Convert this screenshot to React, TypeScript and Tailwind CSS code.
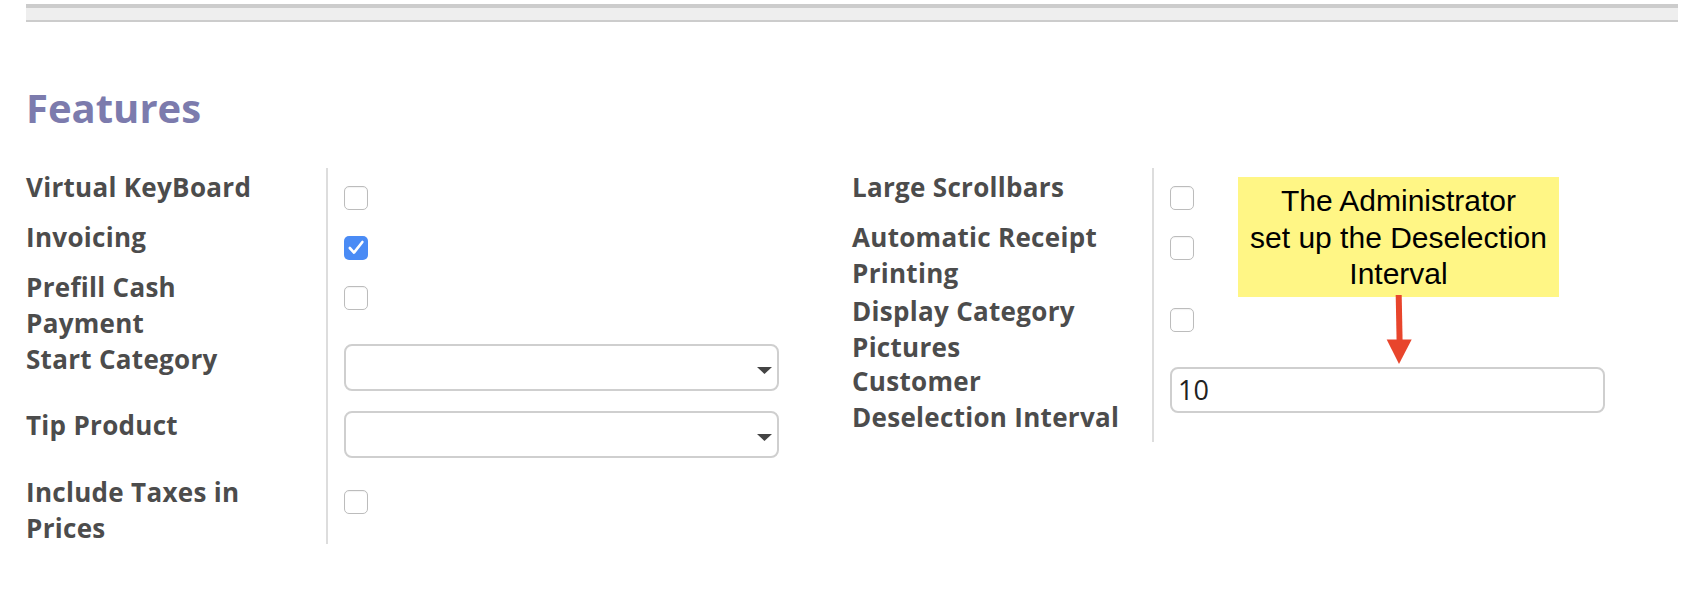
import React from "react";

const Box = ({ checked = false }: { checked?: boolean }) =>
  checked ? (
    <span className="flex items-center justify-center w-[24px] h-[24px] rounded-[5px] bg-[#4a8bf5]">
      <svg viewBox="0 0 24 24" className="w-[24px] h-[24px]">
        <path d="M5.8 12 L10 16.6 L18.4 6" stroke="white" strokeWidth="2.6" fill="none" strokeLinecap="round" strokeLinejoin="round" />
      </svg>
    </span>
  ) : (
    <span className="block w-[24px] h-[24px] rounded-[5px] border-[1.5px] border-[#bcbcbc] bg-white shadow-[inset_0_1px_1px_rgba(0,0,0,0.05)]" />
  );

const Select = () => (
  <div className="relative w-[435px] h-[47px] rounded-[8px] border-2 border-[#cfcfcf] bg-white">
    <svg viewBox="0 0 15 7" className="absolute right-[5px] top-[21px] w-[15px] h-[7px]">
      <path d="M0 0 H15 L7.5 7 Z" fill="#444" />
    </svg>
  </div>
);

type Row = { h: string; label: React.ReactNode; value: React.ReactNode; vt: string };

const Label = ({ children }: { children: React.ReactNode }) => (
  <div className="w-[302px] shrink-0 border-r-2 border-[#dddddd] pt-[1px] text-[26px] leading-[36px] tracking-[0.3px] font-bold text-[#4c4c4c] whitespace-nowrap">
    {children}
  </div>
);

const Group = ({ rows }: { rows: Row[] }) => (
  <div className="flex flex-col">
    {rows.map((r, i) => (
      <div key={i} className={`flex ${r.h}`}>
        <Label>{r.label}</Label>
        <div className={`pl-[16px] ${r.vt}`}>{r.value}</div>
      </div>
    ))}
  </div>
);

export default function App() {
  const left: Row[] = [
    { h: "h-[50px]", label: "Virtual KeyBoard", value: <Box />, vt: "pt-[18px]" },
    { h: "h-[50px]", label: "Invoicing", value: <Box checked />, vt: "pt-[18px]" },
    { h: "h-[72px]", label: <>Prefill Cash<br />Payment</>, value: <Box />, vt: "pt-[18px]" },
    { h: "h-[66px]", label: "Start Category", value: <Select />, vt: "pt-[4px]" },
    { h: "h-[67px]", label: "Tip Product", value: <Select />, vt: "pt-[5px]" },
    { h: "h-[71px]", label: <>Include Taxes in<br />Prices</>, value: <Box />, vt: "pt-[17px]" },
  ];
  const right: Row[] = [
    { h: "h-[50px]", label: "Large Scrollbars", value: <Box />, vt: "pt-[18px]" },
    { h: "h-[74px]", label: <>Automatic Receipt<br />Printing</>, value: <Box />, vt: "pt-[18px]" },
    { h: "h-[70px]", label: <>Display Category<br />Pictures</>, value: <Box />, vt: "pt-[16px]" },
    {
      h: "h-[80px]",
      label: <>Customer<br />Deselection Interval</>,
      value: (
        <div className="flex items-center w-[435px] h-[46px] rounded-[8px] border-2 border-[#cfcfcf] bg-white pl-[6px] text-[27px] text-[#222] font-normal">
          10
        </div>
      ),
      vt: "pt-[5px]",
    },
  ];

  return (
    <div className="relative min-h-[606px] bg-white pl-[26px] pr-[4px] pt-[4px] font-['Open_Sans',sans-serif]">
      <div className="h-[18px] border-t-4 border-b-2 border-[#cccccc] bg-[#eeeeee]" />
      <h2 className="mt-[62px] text-[40px] leading-[48px] font-bold text-[#7c7bad]">Features</h2>
      <div className="mt-[36px] grid grid-cols-2">
        <Group rows={left} />
        <Group rows={right} />
      </div>

      <div className="absolute left-[1238px] top-[177px] w-[321px] h-[120px] bg-[#fff685] pt-[6px] text-center font-['Liberation_Sans',Arial,sans-serif] text-[30px] leading-[36.7px] text-black">
        The Administrator
        <br />
        set up the Deselection
        <br />
        Interval
      </div>
      <svg className="absolute left-[1384px] top-[295px] w-[30px] h-[72px]" viewBox="0 0 30 72">
        <path d="M14.7 0 L15.6 46" stroke="#e8452c" strokeWidth="6" />
        <path d="M2.7 44.5 H27.7 L15 69 Z" fill="#e8452c" />
      </svg>
    </div>
  );
}
